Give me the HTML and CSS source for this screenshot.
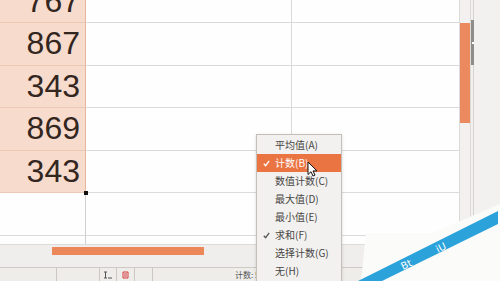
FILE: index.html
```html
<!DOCTYPE html>
<html lang="zh">
<head>
    <meta charset="UTF-8">
    <title>计数</title>
    <link rel="stylesheet" href="styles.css">
</head>
<body>
<div class="window">
    <div class="main">
        <div class="sheet">
            <div class="rows">
                <div class="cell a">767</div><div class="cell b"></div><div class="cell c"></div>
                <div class="cell a">867</div><div class="cell b"></div><div class="cell c"></div>
                <div class="cell a">343</div><div class="cell b"></div><div class="cell c"></div>
                <div class="cell a">869</div><div class="cell b"></div><div class="cell c"></div>
                <div class="cell a last">343</div><div class="cell b"></div><div class="cell c"></div>
                <div class="cell empty"></div><div class="cell b"></div><div class="cell c"></div>
                <div class="cell empty"></div><div class="cell b"></div><div class="cell c"></div>
            </div>
        </div>
        <div class="vscroll">
            <div class="vtrack"><div class="vthumb"></div></div>
            <div class="rail"><div class="rail-knob"><span></span></div></div>
        </div>
    </div>
    <div class="hscroll"><div class="hthumb"></div></div>
    <div class="status">
        <div class="seg w57"></div>
        <div class="seg w43"></div>
        <div class="seg w17 icon">
            <svg width="10" height="8" viewBox="0 0 10 8"><path d="M1 1h3M2.5 1v6M1 7h3M5 7h4" stroke="#555" stroke-width="1" fill="none"/></svg>
        </div>
        <div class="seg w18 icon">
            <svg width="7" height="8" viewBox="0 0 7 8"><path d="M1 1h5v6H1z M2 3h3M2 5h3" stroke="#d23a3a" stroke-width="1" fill="none"/></svg>
        </div>
        <div class="seg w18"></div>
        <div class="seg text">计数: 5</div>
    </div>

    <div class="menu">
        <div class="item">平均值(A)</div>
        <div class="item active">
            <svg class="check" width="7" height="7" viewBox="0 0 7 7"><path d="M0.8 3.8l1.8 1.9 3.6-4.8" stroke="#fff" stroke-width="1.3" fill="none"/></svg>
            计数(B)
        </div>
        <div class="item">数值计数(C)</div>
        <div class="item">最大值(D)</div>
        <div class="item">最小值(E)</div>
        <div class="item">
            <svg class="check" width="7" height="7" viewBox="0 0 7 7"><path d="M0.8 3.8l1.8 1.9 3.6-4.8" stroke="#555" stroke-width="1.3" fill="none"/></svg>
            求和(F)
        </div>
        <div class="item">选择计数(G)</div>
        <div class="item">无(H)</div>
    </div>

    <svg class="cursor" width="11" height="16" viewBox="0 0 11 16">
        <path d="M1 1v12.5l3-2.8 2 4.3 2-0.9-2-4.2h4z" fill="#fff" stroke="#111" stroke-width="1" stroke-linejoin="round"/>
    </svg>

    <svg class="watermark" width="160" height="81" viewBox="0 0 160 81">
        <polygon points="21,81 26,33 92,33 160,4 160,81" fill="#fbfbfa"/>
        <polygon points="18,81 158,11 158,24 42,81" fill="#2ba2da"/>
        <text x="63" y="70" transform="rotate(-26.7 63 70)" fill="#fff" font-size="10" font-family="DejaVu Sans, sans-serif">Bt</text>
        <text x="98" y="53" transform="rotate(-26.7 98 53)" fill="#fff" font-size="10" font-family="DejaVu Sans, sans-serif">iU</text>
    </svg>
</div>
</body>
</html>
```

FILE: styles.css
```css
* {
    margin: 0;
    padding: 0;
    box-sizing: border-box;
}

body {
    width: 500px;
    height: 281px;
    overflow: hidden;
    background-color: #efeeec;
    font-family: "Liberation Sans", "Noto Sans CJK SC", sans-serif;
}

.window {
    position: relative;
    width: 500px;
    height: 281px;
    display: flex;
    flex-direction: column;
}

.main {
    display: flex;
    height: 244px;
}

.sheet {
    width: 460px;
    height: 244px;
    overflow: hidden;
    background-color: #fefefe;
}

.rows {
    display: grid;
    grid-template-columns: 86px 206px 168px;
    grid-auto-rows: 42.5px;
    margin-top: -19.5px;
}

.cell {
    border-bottom: 1px solid #dadada;
    border-right: 1px solid #dadada;
}

.cell.a {
    display: flex;
    align-items: center;
    justify-content: flex-end;
    padding-right: 5px;
    background-color: #f7dbcc;
    border-bottom-color: #ecc8b6;
    border-right-color: #e6b59c;
    color: #33261f;
    font-size: 32px;
}

.cell.a.last {
    position: relative;
}

.cell.a.last::after {
    content: "";
    position: absolute;
    right: -3px;
    bottom: -3px;
    width: 4px;
    height: 4px;
    background-color: #111;
}

.cell.empty {
    border-right-color: #cfcfcf;
}

.vscroll {
    flex: 1;
    display: flex;
    background-color: #f2f1ef;
}

.vtrack {
    width: 11px;
    padding-top: 23px;
    border-right: 1px solid #dddad6;
}

.vthumb {
    width: 10px;
    height: 100px;
    background-color: #ec8a5f;
}

.rail {
    width: 3px;
    padding-top: 20px;
    border-right: 1px solid #d6d3ce;
}

.rail-knob {
    display: flex;
    justify-content: center;
    align-items: center;
    width: 3px;
    height: 45px;
    background-color: #8f8d89;
}

.rail-knob span {
    width: 2px;
    height: 2px;
    background-color: #fff;
}

.hscroll {
    height: 24px;
    padding: 2px 0 0 52px;
    border-top: 1px solid #dcdcdc;
    border-bottom: 1px solid #cdcac5;
    background-color: #efeeec;
}

.hthumb {
    width: 152px;
    height: 8px;
    background-color: #ec8759;
}

.status {
    display: flex;
    height: 13px;
    background-color: #efedea;
    color: #555;
    font-size: 8px;
}

.seg {
    height: 13px;
    border-right: 1px solid #cbc8c3;
}

.seg.icon {
    display: flex;
    align-items: center;
    justify-content: center;
}

.w57 { width: 57px; }
.w43 { width: 43px; }
.w17 { width: 17px; }
.w18 { width: 18px; }

.seg.text {
    flex: 1;
    border-right: none;
    padding-left: 82px;
    line-height: 13px;
    font-family: "Noto Sans CJK SC", sans-serif;
}

.menu {
    position: absolute;
    left: 256px;
    top: 134px;
    width: 86px;
    height: 160px;
    padding-top: 1px;
    background-color: #f2f1ef;
    border: 1px solid #c3bfb9;
    box-shadow: 0 1px 3px rgba(0, 0, 0, 0.15);
}

.item {
    position: relative;
    height: 18px;
    padding-left: 18px;
    line-height: 18px;
    color: #474543;
    font-size: 10px;
    font-family: "Noto Sans CJK SC", sans-serif;
}

.item.active {
    background-color: #eb7443;
    color: #fff;
}

.check {
    position: absolute;
    left: 6px;
    top: 6px;
}

.cursor {
    position: absolute;
    left: 307px;
    top: 161px;
}

.watermark {
    position: absolute;
    left: 340px;
    top: 200px;
}
```
